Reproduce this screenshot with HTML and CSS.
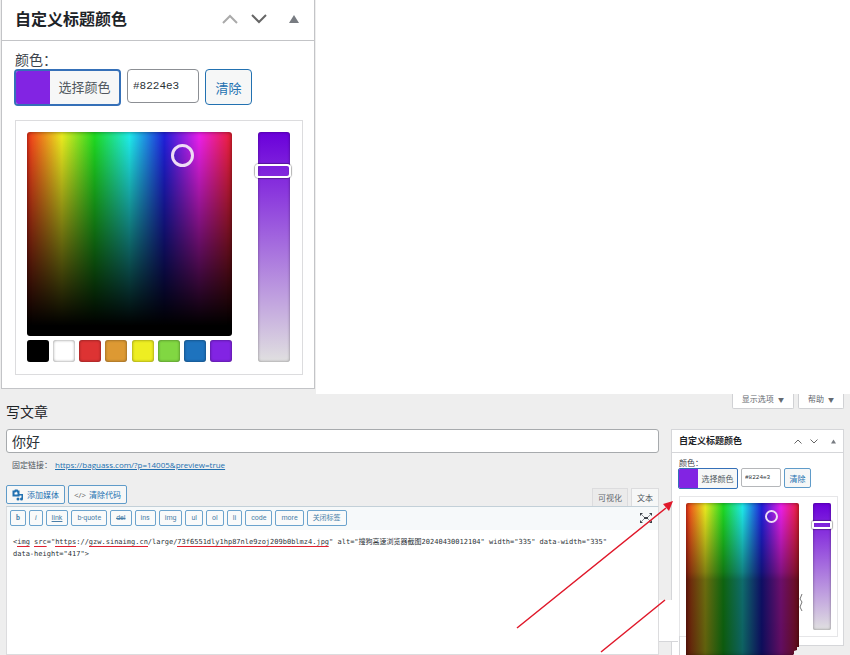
FILE: index.html
```
<!DOCTYPE html>
<html lang="zh-CN">
<head>
    <meta charset="UTF-8">
    <meta name="viewport" content="width=device-width, initial-scale=1.0">
    <title>写文章</title>
    <link rel="stylesheet" href="styles.css">
</head>
<body>
    <section class="preview">
        <div class="preview-inner">
            <div class="panel">
                <div class="panel-header">
                    <h2>自定义标题颜色</h2>
                    <button class="icon-btn muted" aria-label="上移"><svg viewBox="0 0 16 10"><path d="M1 9l7-7 7 7"/></svg></button>
                    <button class="icon-btn" aria-label="下移"><svg viewBox="0 0 16 10"><path d="M1 1l7 7 7-7"/></svg></button>
                    <button class="icon-btn toggle" aria-label="切换面板"><svg viewBox="0 0 10 8"><path d="M5 0l5 8H0z"/></svg></button>
                </div>
                <div class="panel-body">
                    <label class="color-label" for="color-large">颜色：</label>
                    <div class="color-row">
                        <button class="color-btn"><span class="color-chip"></span><span class="color-text">选择颜色</span></button>
                        <input class="color-input" id="color-large" type="text" value="#8224e3">
                        <button class="clear-btn">清除</button>
                    </div>
                    <div class="picker">
                        <div class="picker-main">
                            <div class="square"><span class="square-handle"></span></div>
                            <div class="palette">
                                <button class="swatch black" aria-label="黑色"></button>
                                <button class="swatch white" aria-label="白色"></button>
                                <button class="swatch red" aria-label="红色"></button>
                                <button class="swatch orange" aria-label="橙色"></button>
                                <button class="swatch yellow" aria-label="黄色"></button>
                                <button class="swatch green" aria-label="绿色"></button>
                                <button class="swatch blue" aria-label="蓝色"></button>
                                <button class="swatch purple" aria-label="紫色"></button>
                            </div>
                        </div>
                        <input class="strip" type="range" min="0" max="100" value="15" aria-label="饱和度">
                    </div>
                </div>
            </div>
        </div>
    </section>

    <section class="editor">
        <main class="editor-main">
            <h1>写文章</h1>
            <input class="post-title" type="text" value="你好" aria-label="标题">
            <div class="permalink">
                <strong>固定链接：</strong>
                <a href="#">https://baguass.com/?p=14005&amp;preview=true</a>
            </div>
            <div class="tools">
                <button class="media-btn">
                    <svg class="media-icon" viewBox="0 0 12 12"><path class="camera" d="M1.500 2.500h1.500l.5-1h1.500l.5 1h1v4h-5z"/><path d="M7 5h4v5a1.500 1.500 0 1 1-1.500-1.500V6.500H7z"/><circle cx="6" cy="10" r="1.500"/></svg>
                    添加媒体
                </button>
                <button class="media-btn"><span class="code-mark">&lt;/&gt;</span>清除代码</button>
                <div class="tabs">
                    <button class="tab">可视化</button>
                    <button class="tab active">文本</button>
                </div>
            </div>
            <div class="quicktags">
                <button class="tag bold">b</button>
                <button class="tag italic">i</button>
                <button class="tag underline">link</button>
                <button class="tag">b-quote</button>
                <button class="tag strike">del</button>
                <button class="tag">ins</button>
                <button class="tag">img</button>
                <button class="tag">ul</button>
                <button class="tag">ol</button>
                <button class="tag">li</button>
                <button class="tag">code</button>
                <button class="tag">more</button>
                <button class="tag">关闭标签</button>
                <button class="full-btn" aria-label="全屏"><svg viewBox="0 0 12 10"><path d="M0 0h3L0 3zM12 0H9l3 3zM0 10h3L0 7zM12 10H9l3-3zM4 4h4v2H4z"/><path class="thin" d="M1 1l3 3M11 1L8 4M11 9L8 6M1 9l3-3"/></svg></button>
            </div>
            <textarea class="content" aria-label="正文" spellcheck="false">&lt;img src="https://gzw.sinaimg.cn/large/73f6551dly1hp87nle9zoj209b0blmz4.jpg" alt="搜狗高速浏览器截图20240430012104" width="335" data-width="335"
data-height="417"&gt;</textarea>
        </main>

        <aside class="sidebar">
            <div class="screen-tabs">
                <button>显示选项 <span>▼</span></button>
                <button>帮助 <span>▼</span></button>
            </div>
            <div class="panel compact">
                <div class="panel-header">
                    <h2>自定义标题颜色</h2>
                    <button class="icon-btn" aria-label="上移"><svg viewBox="0 0 16 10"><path d="M1 9l7-7 7 7"/></svg></button>
                    <button class="icon-btn" aria-label="下移"><svg viewBox="0 0 16 10"><path d="M1 1l7 7 7-7"/></svg></button>
                    <button class="icon-btn toggle" aria-label="切换面板"><svg viewBox="0 0 10 8"><path d="M5 0l5 8H0z"/></svg></button>
                </div>
                <div class="panel-body">
                    <label class="color-label" for="color-small">颜色：</label>
                    <div class="color-row">
                        <button class="color-btn"><span class="color-chip"></span><span class="color-text">选择颜色</span></button>
                        <input class="color-input" id="color-small" type="text" value="#8224e3">
                        <button class="clear-btn">清除</button>
                    </div>
                    <div class="picker">
                        <div class="picker-main">
                            <div class="square"><span class="square-handle"></span></div>
                        </div>
                        <input class="strip" type="range" min="0" max="100" value="15" aria-label="饱和度">
                    </div>
                </div>
            </div>
        </aside>

        <!-- arrows pointing at the color box -->
        <svg class="notes" viewBox="0 0 350 261">
            <path class="patch" d="M159 206h19v41h-19z"/>
            <path class="patch" d="M172 247h14v14h-14z"/>
            <path class="edge" d="M159 247.500h19M171.500 248v13M179.500 242v19"/>
            <path class="arrow" d="M17 234L166 114M101 258l64-52"/>
            <path class="arrow-head" d="M173 107l-4 10-6-7z"/>
            <path class="speck" d="M302 200l-2 5 2 3-2 5 2 4"/>
        </svg>
    </section>
</body>
</html>
```
FILE: styles.css
```
* {
    margin: 0;
    padding: 0;
    box-sizing: border-box;
}

body {
    display: flex;
    flex-direction: column;
    height: 100vh;
    overflow: hidden;
    background-color: #fff;
    color: #1d2327;
    font-family: "Open Sans", "Noto Sans CJK SC", sans-serif;
}

button,
input,
textarea {
    font-family: inherit;
}

button {
    border: none;
    background: none;
    cursor: pointer;
}

svg {
    display: block;
}

/* Large preview */
.preview {
    display: flex;
    flex-shrink: 0;
}

.preview-inner {
    width: 316px;
    padding: 0 1px 5px;
    background-color: #eee;
}

/* Color panel */
.panel {
    background-color: #fff;
    border: 1px solid #c3c4c7;
    border-top: none;
}

.panel-header {
    display: flex;
    align-items: center;
    height: 41px;
    padding: 0 15px 2px 13px;
    border-bottom: 1px solid #c3c4c7;
}

.panel-header h2 {
    flex: 1;
    font-size: 16px;
    line-height: 24px;
    white-space: nowrap;
}

.icon-btn {
    margin-left: 13px;
}

.icon-btn svg {
    width: 16px;
    height: 10px;
    fill: none;
    stroke: #666;
    stroke-width: 2;
}

.icon-btn.muted svg {
    stroke: #aaa;
}

.icon-btn.toggle {
    margin-left: 22px;
}

.icon-btn.toggle svg {
    width: 10px;
    height: 8px;
    fill: #787c82;
    stroke: none;
}

.panel-body {
    padding: 10px 11px 13px 12px;
}

.color-label {
    display: block;
    font-size: 14px;
    line-height: 18px;
    color: #3c434a;
    margin-left: 1px;
}

.color-row {
    display: flex;
    gap: 6px;
    align-items: flex-start;
}

.color-btn {
    display: flex;
    width: 107px;
    height: 37px;
    border: 2px solid #3570b8;
    border-radius: 4px;
    background-color: #f6f7f7;
    overflow: hidden;
}

.color-chip {
    width: 34px;
    height: 100%;
    background-color: #8224e3;
}

.color-text {
    flex: 1;
    font-size: 13px;
    line-height: 33px;
    color: #50575e;
    text-align: center;
    white-space: nowrap;
}

.color-input {
    width: 72px;
    height: 34px;
    padding: 0 5px;
    border: 1px solid #8c8f94;
    border-radius: 4px;
    font-family: "Liberation Mono", monospace;
    font-size: 11px;
    color: #2c3338;
}

.clear-btn {
    width: 47px;
    height: 36px;
    border: 1px solid #2271b1;
    border-radius: 4px;
    background-color: #f6f7f7;
    color: #2271b1;
    font-size: 13px;
    white-space: nowrap;
}

.picker {
    display: flex;
    justify-content: space-between;
    margin: 14px 0 0 1px;
    padding: 11px 12px 12px 11px;
    border: 1px solid #dcdcde;
}

.square {
    position: relative;
    width: 205px;
    height: 204px;
    border-radius: 3px;
    background:
        linear-gradient(rgba(0, 0, 0, 0), #000 95%),
        linear-gradient(90deg, #f5331a, #eeee20 17%, #1fdd22 33%, #20eeee 50%, #2020dd 67%, #ee20ee 84%, #ee2030);
    box-shadow: inset 0 0 4px rgba(0, 0, 0, 0.5);
}

.square-handle {
    position: absolute;
    left: 144px;
    top: 12px;
    width: 23px;
    height: 23px;
    border: 3px solid #eedcf5;
    border-radius: 50%;
}

.palette {
    display: flex;
    justify-content: space-between;
    margin-top: 4px;
}

.swatch {
    width: 22px;
    height: 22px;
    border-radius: 3px;
    box-shadow: inset 0 0 3px rgba(0, 0, 0, 0.5);
}

.black {
    background-color: #000;
}

.white {
    background-color: #fff;
}

.red {
    background-color: #dd3333;
}

.orange {
    background-color: #dd9933;
}

.yellow {
    background-color: #eeee22;
}

.green {
    background-color: #81d742;
}

.blue {
    background-color: #1e73be;
}

.purple {
    background-color: #8224e3;
}

.strip {
    appearance: none;
    writing-mode: vertical-lr;
    width: 32px;
    height: 230px;
    border-radius: 3px;
    background: linear-gradient(#6a00da, #8833dd 24%, #e0e0e0);
    box-shadow: inset 0 0 3px rgba(0, 0, 0, 0.4);
}

.strip::-webkit-slider-thumb {
    appearance: none;
    width: 36px;
    height: 14px;
    margin-left: -2px;
    border: 2px solid #fff;
    border-radius: 4px;
    box-shadow: 0 0 1px 1px rgba(0, 0, 0, 0.3);
}

/* Post editor */
.editor {
    position: relative;
    display: flex;
    flex: 1;
    gap: 12px;
    min-height: 0;
    padding: 0 6px 0 6px;
    background-color: #eee;
}

.editor-main {
    display: flex;
    flex: 1;
    flex-direction: column;
    min-width: 0;
}

.editor-main h1 {
    margin: 8px 0 7px;
    font-size: 14px;
    font-weight: normal;
    line-height: 20px;
}

.post-title {
    flex-shrink: 0;
    width: 100%;
    height: 24px;
    padding: 0 5px;
    border: 1px solid #a7aaad;
    border-radius: 3px;
    background-color: #fff;
    font-size: 14px;
    color: #2c3338;
}

.permalink {
    display: flex;
    gap: 3px;
    margin: 6px 0 14px 6px;
    font-size: 8px;
    line-height: 12px;
    color: #50575e;
    white-space: nowrap;
}

.permalink strong {
    font-weight: normal;
}

.permalink a {
    color: #2271b1;
}

.tools {
    display: flex;
    gap: 3px;
    height: 21px;
}

.media-btn {
    display: flex;
    align-items: center;
    gap: 3px;
    height: 19px;
    padding: 0 5px;
    border: 1px solid #5f9bc9;
    border-radius: 2px;
    background-color: #f6f7f7;
    color: #2271b1;
    font-size: 8px;
    white-space: nowrap;
}

.media-icon {
    width: 12px;
    height: 12px;
    fill: #2271b1;
}

.media-icon .camera {
    fill: #fff;
    stroke: #2271b1;
    stroke-width: 2;
}

.code-mark {
    color: #666;
}

.tabs {
    display: flex;
    gap: 3px;
    margin: 3px 0 0 auto;
}

.tab {
    padding: 0 5px;
    border: 1px solid #dcdcde;
    border-bottom: none;
    background-color: #ebebeb;
    color: #646970;
    font-size: 8px;
}

.tab.active {
    background-color: #f6f7f7;
    color: #50575e;
}

.quicktags {
    display: flex;
    flex-shrink: 0;
    gap: 3px;
    height: 24px;
    padding: 3px 6px 4px 3px;
    border: 1px solid #dcdcde;
    border-top-color: #c3d0d8;
    border-bottom: none;
    background-color: #f6f9fa;
}

.tag {
    padding: 0 5px;
    border: 1px solid #6ba3cd;
    border-radius: 2px;
    background-color: #f9fafa;
    color: #4a7fa8;
    font-family: Roboto, "Noto Sans CJK SC", sans-serif;
    font-size: 7px;
    line-height: 14px;
    white-space: nowrap;
}

.tag.bold {
    font-weight: bold;
}

.tag.italic {
    font-style: italic;
}

.tag.underline {
    text-decoration: underline;
}

.tag.strike {
    text-decoration: line-through;
}

.full-btn {
    margin-left: auto;
}

.full-btn svg {
    width: 12px;
    height: 10px;
    fill: #3c434a;
}

.full-btn .thin {
    fill: none;
    stroke: #8c8f94;
}

/* The gradients are the red marks under misspelled words */
.content {
    flex: 1;
    width: 100%;
    padding: 6px 4px 0 6px;
    border: 1px solid #dcdcde;
    border-top: none;
    outline: none;
    resize: none;
    overflow: hidden;
    background-color: #fff;
    background-image:
        linear-gradient(#e02030, #e02030),
        linear-gradient(#e02030, #e02030),
        linear-gradient(#e02030, #e02030),
        linear-gradient(#e02030, #e02030),
        linear-gradient(#e02030, #e02030);
    background-origin: content-box;
    background-repeat: no-repeat;
    background-position: 1ch 10px, 5ch 10px, 10ch 10px, 18ch 10px, 39ch 10px;
    background-size: 3ch 1px, 3ch 1px, 5ch 1px, 14ch 1px, 36ch 1px;
    color: #2c3338;
    font-family: "DejaVu Sans Mono", "Noto Sans CJK SC", monospace;
    font-size: 7px;
    line-height: 12px;
}

.sidebar {
    width: 173px;
    flex-shrink: 0;
}

.screen-tabs {
    display: flex;
    justify-content: flex-end;
    gap: 4px;
    margin-bottom: 20px;
}

.screen-tabs button {
    height: 15px;
    padding: 0 9px 4px;
    border: 1px solid #d0d1d4;
    border-top: none;
    border-radius: 0 0 2px 2px;
    background-color: #fff;
    color: #646970;
    font-size: 8px;
    line-height: 10px;
    white-space: nowrap;
}

.screen-tabs span {
    margin-left: 2px;
    font-size: 6px;
}

/* Sidebar size of the color panel */
.compact {
    border: 1px solid #d5d6d9;
}

.compact .panel-header {
    height: 23px;
    padding: 0 7px 0 7px;
    border-color: #d5d6d9;
}

.compact .panel-header h2 {
    font-size: 9px;
    line-height: 14px;
}

.compact .icon-btn {
    margin-left: 8px;
}

.compact .icon-btn svg {
    width: 8px;
    height: 5px;
}

.compact .icon-btn.toggle {
    margin-left: 13px;
}

.compact .icon-btn.toggle svg {
    width: 5px;
    height: 5px;
}

.compact .panel-body {
    padding: 5px 5px 8px 6px;
}

.compact .color-label {
    font-size: 8px;
    line-height: 10px;
}

.compact .color-row {
    gap: 3px;
}

.compact .color-btn {
    width: 60px;
    height: 21px;
    border-width: 1px;
    border-radius: 2px;
}

.compact .color-chip {
    width: 19px;
}

.compact .color-text {
    font-size: 8px;
    line-height: 19px;
}

.compact .color-input {
    width: 40px;
    height: 19px;
    padding: 0 3px;
    border-radius: 2px;
    border-color: #b5b7ba;
    font-size: 6px;
}

.compact .clear-btn {
    width: 27px;
    height: 20px;
    border-color: #5f9bc9;
    border-radius: 2px;
    font-size: 8px;
}

.compact .picker {
    margin-top: 7px;
    padding: 6px;
    border-color: #e6e6e8;
}

.compact .picker-main {
    height: 127px;
}

/* Runs past the bottom of its box, with a torn corner */
.compact .square {
    width: 113px;
    height: 153px;
    border-radius: 2px 2px 0 0;
    background:
        linear-gradient(rgba(0, 0, 0, 0), rgba(0, 0, 0, 0.45) 45%, rgba(0, 0, 0, 0.55) 50%, rgba(0, 0, 0, 0.6)),
        linear-gradient(90deg, #f5331a, #eeee20 17%, #1fdd22 33%, #20eeee 50%, #2020dd 67%, #ee20ee 84%, #ee2030);
    clip-path: polygon(0 0, 100% 0, 100% 144px, 111px 144px, 111px 147px, 108px 148px, 108px 151px, 106px 153px, 0 153px);
}

.compact .square-handle {
    left: 79px;
    top: 7px;
    width: 13px;
    height: 13px;
    border-width: 2px;
}

.compact .strip {
    width: 18px;
    height: 127px;
    border-radius: 2px;
}

.compact .strip::-webkit-slider-thumb {
    width: 20px;
    height: 8px;
    margin-left: -1px;
    border-width: 2px;
    border-radius: 2px;
}

.notes {
    position: absolute;
    top: 0;
    right: 0;
    width: 350px;
    height: 261px;
    pointer-events: none;
}

.patch {
    fill: #fff;
}

.edge {
    fill: none;
    stroke: #d5d6d9;
}

.arrow {
    fill: none;
    stroke: #e0182a;
    stroke-width: 1.5;
}

.arrow-head {
    fill: #e0182a;
}

.speck {
    fill: none;
    stroke: #777;
}
```
